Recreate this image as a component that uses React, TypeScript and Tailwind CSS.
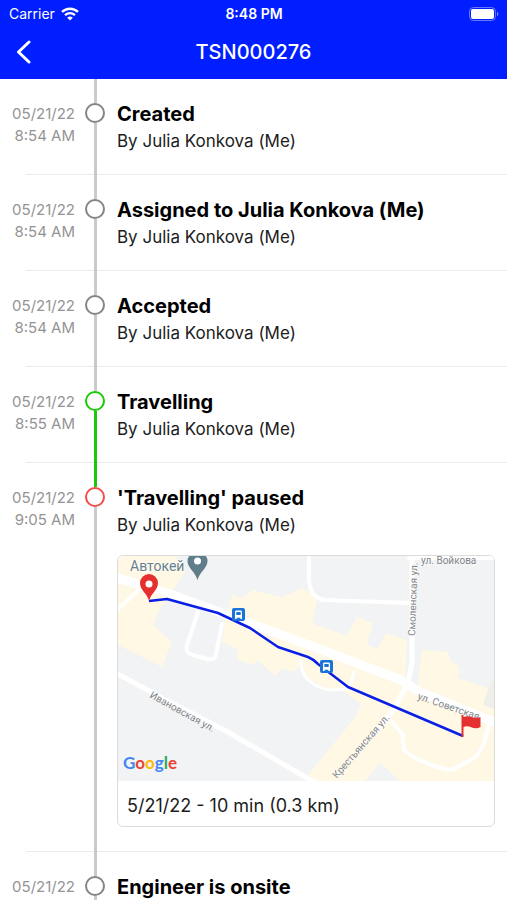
import { Fragment } from 'react';

type Tone = 'idle' | 'active' | 'paused';

interface TimelineEvent {
  date: string;
  time?: string;
  title: string;
  author?: string;
  tone: Tone;
  before: Tone;
  after: Tone;
  trip?: string;
}

const ME = 'Julia Konkova (Me)';

const EVENTS: TimelineEvent[] = [
  { date: '05/21/22', time: '8:54 AM', title: 'Created', author: ME, tone: 'idle', before: 'idle', after: 'idle' },
  { date: '05/21/22', time: '8:54 AM', title: `Assigned to ${ME}`, author: ME, tone: 'idle', before: 'idle', after: 'idle' },
  { date: '05/21/22', time: '8:54 AM', title: 'Accepted', author: ME, tone: 'idle', before: 'idle', after: 'idle' },
  { date: '05/21/22', time: '8:55 AM', title: 'Travelling', author: ME, tone: 'active', before: 'idle', after: 'active' },
  {
    date: '05/21/22',
    time: '9:05 AM',
    title: "'Travelling' paused",
    author: ME,
    tone: 'paused',
    before: 'active',
    after: 'idle',
    trip: '5/21/22 - 10 min (0.3 km)',
  },
  { date: '05/21/22', title: 'Engineer is onsite', tone: 'idle', before: 'idle', after: 'idle' },
];

const RING: Record<Tone, string> = {
  idle: 'border-[#858585]',
  active: 'border-[#1bc908]',
  paused: 'border-[#f04e4e]',
};

const LINE: Record<Tone, string> = {
  idle: 'bg-[#cacaca]',
  active: 'bg-[#1bc908]',
  paused: 'bg-[#f04e4e]',
};

function StatusBar() {
  return (
    <div className="grid grid-cols-3 items-center pt-1 pr-2 pl-[9px] text-sm leading-5">
      <div className="flex items-center gap-[6px]">
        <span>Carrier</span>
        <svg width="18" height="14" viewBox="0 0 18 14" fill="none" stroke="white" strokeWidth="2.4" aria-hidden="true">
          <path d="M1 4.9C5.6.6 12.4.6 17 4.9" />
          <path d="M4 8.2c3-2.6 7-2.6 10 0" />
          <path d="M9 13.6 6.2 10.8a4.1 4.1 0 0 1 5.6 0Z" fill="white" stroke="none" />
        </svg>
      </div>
      <span className="text-center font-semibold">8:48 PM</span>
      <svg className="justify-self-end" width="30" height="14" viewBox="0 0 30 14" aria-hidden="true">
        <rect x="0.5" y="0.5" width="26" height="13" rx="4" fill="none" stroke="white" strokeOpacity="0.4" />
        <rect x="2" y="2" width="23" height="10" rx="2" fill="white" />
        <path d="M28 4.8c1.8.8 1.8 3.6 0 4.4Z" fill="white" fillOpacity="0.5" />
      </svg>
    </div>
  );
}

function Header() {
  return (
    <header className="bg-[#001eff] text-white">
      <StatusBar />
      <div className="grid h-[55px] grid-cols-[48px_1fr_48px] items-center">
        <button type="button" aria-label="Back" className="flex h-full items-center pl-4">
          <svg width="16" height="24" viewBox="0 0 16 24" fill="none" stroke="white" strokeWidth="3" aria-hidden="true">
            <path d="M13 2 2.5 12 13 22" strokeLinecap="round" strokeLinejoin="round" />
          </svg>
        </button>
        <h1 className="text-center text-xl leading-7 font-medium">TSN000276</h1>
      </div>
    </header>
  );
}

function BusStop({ x, y }: { x: number; y: number }) {
  return (
    <g transform={`translate(${x} ${y})`}>
      <rect width="13" height="13" rx="2" fill="#1a73d9" />
      <path d="M3 4c0-1 .6-1.5 1.5-1.5h4C9.4 2.5 10 3 10 4v7H8.4V9.800H4.600V11H3Z" fill="white" />
      <rect x="4.3" y="4" width="4.4" height="3" fill="#1a73d9" />
    </g>
  );
}

function RouteMap() {
  return (
    <svg
      viewBox="0 0 376 225"
      className="block w-full font-[Roboto,'Noto_Sans',sans-serif]"
      role="img"
      aria-label="Travelled route"
    >
      <rect width="376" height="225" fill="#f1f3f4" />

      {/* built-up blocks */}
      <g fill="#fef8e5">
        <path d="M0 0H58L67 16 55 34 42 52 35 69 54 86 44 111 0 89Z" />
        <path d="M114 39 124 42 135 34 164 41 184 32 200 41 194 67 229 80 239 61 255 67 249 89 260 93 268 77 289 84 287 126 299 131 304 94 330 96 332 104 342 111 340 122 376 134V225H282L262 207 247 225H192L190 219 238 160 243 148 225 134 205 132 190 122 183 111 174 116 164 112 157 120 140 104 135 109 119 104 120 94 104 86 107 64Z" />
      </g>
      <path d="M366 149c0-8 6-16 8-26h2v30Z" fill="#eeeeeb" />

      {/* streets */}
      <g fill="none" stroke="white" strokeLinejoin="round" strokeLinecap="round">
        <path d="M-3 21 52 38l63 23 68 25 100 38 17 11 78 32" strokeWidth="9" />
        <path d="M0 53 24 31" strokeWidth="4" />
        <path d="M80 56 69 89c-2 6 1 8 6 10l14 4c5 1 8 0 9-5l6-30" strokeWidth="4" />
        <path d="M191 0v24c1 12 6 19 16 20l84 3" strokeWidth="4" />
        <path d="M294-2v108l-4 21-15 28-17 20" strokeWidth="5" />
        <path d="M183 105c-1 17 14 27 30 29l18-1 5-17" strokeWidth="3" />
        <path d="M291 2h85" strokeWidth="4" />
        <path d="M-2 117 48 144l60 31 88 51" strokeWidth="5" />
        <path d="M272 164l13 15 1 15c12 10 31 18 48 20l24-13 7-11 6-20" strokeWidth="4" />
      </g>

      {/* street names */}
      <g fill="#7f8488" fontSize="10" stroke="white" strokeWidth="1" strokeOpacity="0.7" paintOrder="stroke">
        <text transform="translate(31 141) rotate(29)">Ивановская ул.</text>
        <text transform="translate(297 80) rotate(-88)">Смоленская ул.</text>
        <text x="303" y="8">ул. Войкова</text>
        <text transform="translate(299 143) rotate(19)">ул. Советская</text>
        <text transform="translate(219 223) rotate(-49)">Крестьянская ул.</text>
      </g>

      <text x="12" y="15" fontSize="14" fill="#68808c" stroke="white" strokeWidth="1" paintOrder="stroke">
        Автокей
      </text>
      <path d="M79.5 24c-2-8-10-12-10-19 0-3 1-4 2-5h16c1 1 2 2 2 5 0 7-8 11-10 19Z" fill="#607d8b" />
      <circle cx="79.5" cy="5" r="3.5" fill="white" />

      {/* travelled path */}
      <path
        d="M31 45 49 43l51 14 32 15 28 19 30 10q5 2 10 7l30 23 115 49"
        fill="none"
        stroke="#0a1fe6"
        strokeWidth="2.5"
        strokeLinejoin="round"
      />
      <BusStop x={114} y={52} />
      <BusStop x={202} y={104} />

      {/* start pin */}
      <path d="M31 45c-2-8-9-11-9-18a9 9 0 0 1 18 0c0 7-7 10-9 18Z" fill="#e53030" />
      <circle cx="31" cy="28" r="3.5" fill="white" />

      {/* finish flag */}
      <path d="M343.500 159h2v2c6-3 10 3 17 0v10c-7 4-11-3-17 0v10h-2Z" fill="#e53030" />

      <text x="5" y="213" fontSize="17" fontFamily="Lato, sans-serif" fontWeight="700">
        <tspan fill="#4285f4">G</tspan>
        <tspan fill="#ea4335">o</tspan>
        <tspan fill="#fbbc05">o</tspan>
        <tspan fill="#4285f4">g</tspan>
        <tspan fill="#34a853">l</tspan>
        <tspan fill="#ea4335">e</tspan>
      </text>
    </svg>
  );
}

function TripCard({ summary }: { summary: string }) {
  return (
    <div className="mt-[17px] mr-3 mb-1 overflow-hidden rounded-md border border-[#dcdcdc] bg-white">
      <RouteMap />
      <p className="px-[9px] pt-3 pb-2 text-lg leading-[25px] text-[#1c1c1c]">{summary}</p>
    </div>
  );
}

function TimelineRow({ event }: { event: TimelineEvent }) {
  return (
    <Fragment>
      <li className="flex">
        <div className="w-[75px] shrink-0 pt-6 text-right text-[15px] leading-[22px] text-[#949494]">
          <time className="block">{event.date}</time>
          {event.time && <time className="block">{event.time}</time>}
        </div>
        <div className="flex w-10 shrink-0 flex-col items-center" aria-hidden="true">
          <div className={`h-6 w-[3px] ${LINE[event.before]}`} />
          <div className={`size-5 shrink-0 rounded-full border-2 bg-white ${RING[event.tone]}`} />
          <div className={`w-[3px] grow ${LINE[event.after]}`} />
        </div>
        <div className="min-w-0 grow pt-[21px] pb-[21px] pl-[2px]">
          <h2 className="text-xl leading-7 font-bold">{event.title}</h2>
          {event.author && <p className="text-[17px] leading-[26px] text-[#1c1c1c]">By {event.author}</p>}
          {event.trip && <TripCard summary={event.trip} />}
        </div>
      </li>
      <li className="-mt-px ml-[26px] h-px bg-black/8" role="separator" />
    </Fragment>
  );
}

export default function App() {
  return (
    <div className="flex h-screen flex-col bg-white font-[Inter,'Noto_Sans',sans-serif] text-black">
      <Header />
      <main className="min-h-0 grow overflow-y-auto [scrollbar-width:none]">
        <ol>
          {EVENTS.map((event) => (
            <TimelineRow key={event.title} event={event} />
          ))}
        </ol>
      </main>
    </div>
  );
}
